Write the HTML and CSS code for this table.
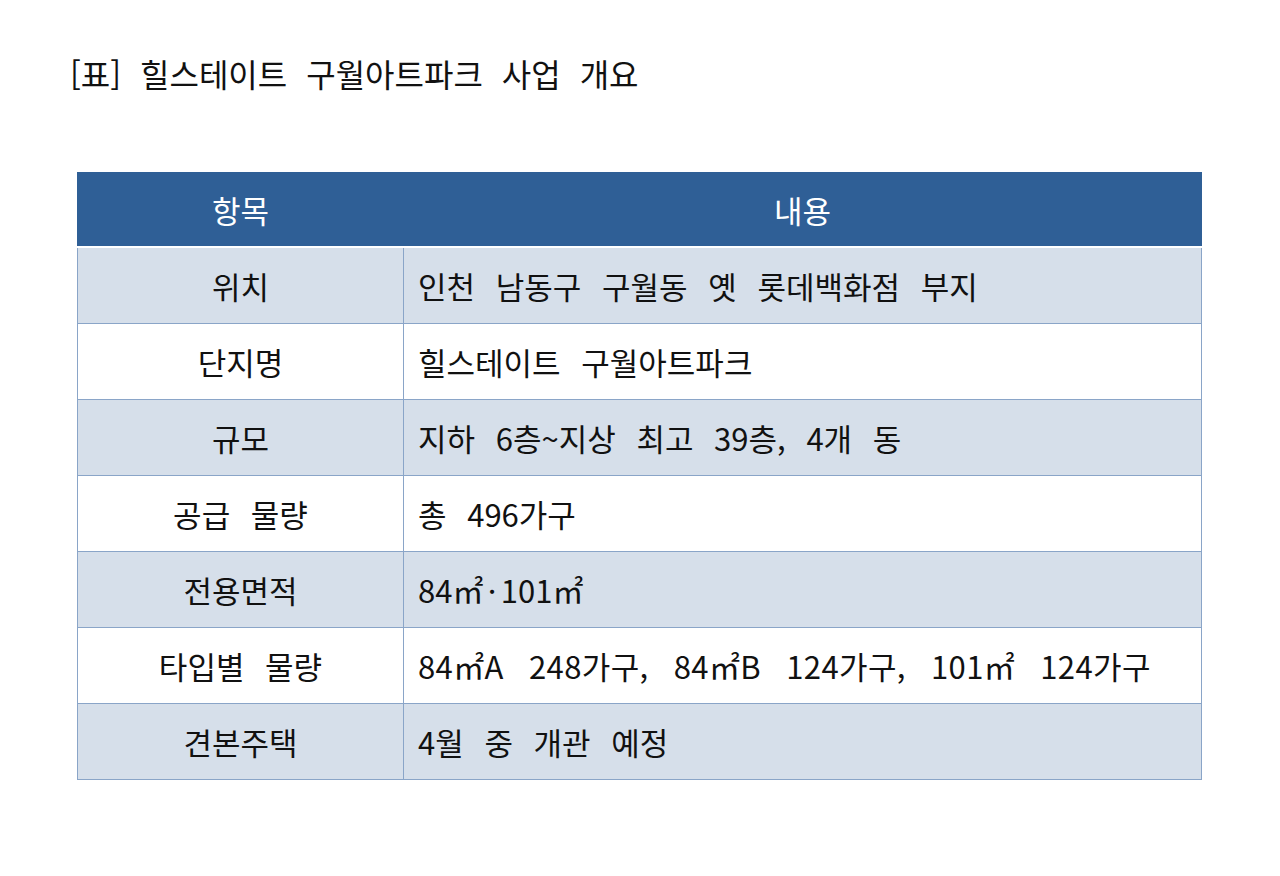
FILE: index.html
```html
<!DOCTYPE html>
<html lang="ko">
<head>
<meta charset="utf-8">
<link rel="stylesheet" href="styles.css">
</head>
<body>
<div class="page">
  <h1 class="title">[표] 힐스테이트 구월아트파크 사업 개요</h1>
  <table class="tbl">
    <colgroup><col class="c1"><col class="c2"></colgroup>
    <thead>
      <tr><th>항목</th><th>내용</th></tr>
    </thead>
    <tbody>
      <tr class="alt"><td class="k">위치</td><td>인천 남동구 구월동 옛 롯데백화점 부지</td></tr>
      <tr><td class="k">단지명</td><td>힐스테이트 구월아트파크</td></tr>
      <tr class="alt"><td class="k">규모</td><td>지하 6층~지상 최고 39층, 4개 동</td></tr>
      <tr><td class="k">공급 물량</td><td>총 496가구</td></tr>
      <tr class="alt"><td class="k">전용면적</td><td>84㎡·101㎡</td></tr>
      <tr><td class="k">타입별 물량</td><td class="wide">84㎡A 248가구, 84㎡B 124가구, 101㎡ 124가구</td></tr>
      <tr class="alt"><td class="k">견본주택</td><td>4월 중 개관 예정</td></tr>
    </tbody>
  </table>
</div>
</body>
</html>
```
FILE: styles.css
```css
html, body {
  margin: 0;
  padding: 0;
  background: #ffffff;
}
body {
  font-family: "Noto Sans CJK KR", "Noto Sans", sans-serif;
  color: #111111;
}
.page {
  padding: 51px 0 0 70px;
}
.title {
  margin: 0;
  font-size: 32px;
  font-weight: 400;
  line-height: 44px;
  word-spacing: 10px;
  letter-spacing: 0;
}
.tbl {
  margin: 77px 0 0 7px;
  border-collapse: collapse;
  width: 1125px;
  table-layout: fixed;
  font-size: 31px;
}
.c1 { width: 326px; }
.tbl th, .tbl td {
  border: 1px solid #8aa5c8;
  height: 75px;
  padding: 0;
  font-weight: 400;
  line-height: 1;
  vertical-align: middle;
  word-spacing: 12px;
  letter-spacing: 0;
}
.tbl thead th {
  background: #2f5f96;
  color: #ffffff;
  border-color: #2f5f96;
  border-bottom-color: #ffffff;
  border-bottom-width: 2px;
  height: 73px;
  text-align: center;
}
.tbl thead th + th {
  border-left-color: #5a7fab;
}
.tbl tbody tr.alt td {
  background: #d6dfea;
}
.tbl td.k {
  text-align: center;
}
.tbl td + td {
  padding-left: 14px;
}
.tbl td.wide {
  word-spacing: 16px;
  letter-spacing: 0.4px;
}
```
